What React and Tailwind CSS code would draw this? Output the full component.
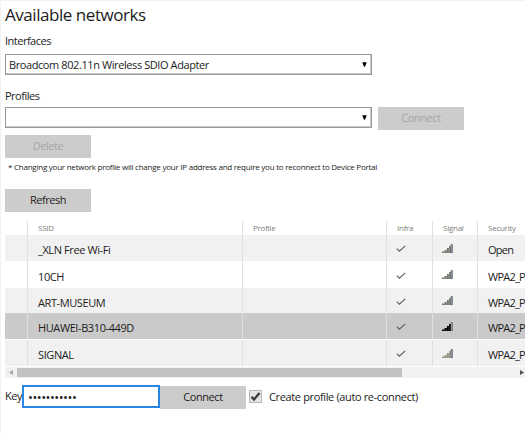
const networks = [
  { ssid: "_XLN Free Wi-Fi", security: "Open", row: "h-[26px] bg-[#f1f1f1]" },
  { ssid: "10CH", security: "WPA2_P", row: "h-[27px] bg-white" },
  { ssid: "ART-MUSEUM", security: "WPA2_P", row: "h-[25px] bg-[#f1f1f1]" },
  { ssid: "HUAWEI-B310-449D", security: "WPA2_P", selected: true, row: "h-[27px] border-b border-white bg-[#cacaca]" },
  { ssid: "SIGNAL", security: "WPA2_P", weak: true, row: "h-[26px] bg-[#f1f1f1]" },
];

const columns = "grid w-[520px] grid-cols-[22px_215px_144px_46px_45px_48px]";

function Check() {
  return (
    <svg className="-ml-px mt-[2px]" width="10" height="8" viewBox="0 0 10 8" fill="none" stroke="#5c5c5c" strokeWidth="1.1">
      <path d="M0.8 3.6 L3.4 6.2 L9.2 0.9" />
    </svg>
  );
}

function Signal({ selected, weak }) {
  const fill = selected ? "#000" : weak ? "#949a84" : "#747c70";
  return (
    <svg className="-ml-px mt-[1px]" width="11" height="10" viewBox="0 0 11 10" fill={fill}>
      <path d="M0 7.5h2.3V9H0zM2.5 6h2.2v3H2.5zM4.9 4h2v5h-2zM7.1 2H9v7H7.1z" />
      <path d="M9 0.5h1.4v8.2H9z" fill={selected ? "#bbb" : "#b0b8c4"} stroke="#66646e" strokeWidth="0.8" />
    </svg>
  );
}

function Select({ children }) {
  return (
    <div className="flex h-[21px] w-[367px] items-center justify-between border border-[#999] bg-white pr-[4px] pl-[3px] shadow-[inset_-1px_-1px_0_#c8c8c8]">
      <span className="whitespace-nowrap text-[11px] leading-[15px] tracking-[-0.41px]">{children}</span>
      <svg className="-mt-px" width="5" height="5" viewBox="0 0 5 5">
        <path d="M0.3 0.2h4.4L3 4.8H2z" fill="#000" />
      </svg>
    </div>
  );
}

function Button({ children, disabled }) {
  return (
    <button
      type="button"
      disabled={disabled}
      className="flex h-[23px] w-[86px] shrink-0 items-center justify-center bg-[#ccc] pb-[2px] text-[11px] leading-[15px] tracking-[-0.45px] text-[#1c1c1c] disabled:text-[#a5a5a5]"
    >
      {children}
    </button>
  );
}

function Cell({ children, className = "" }) {
  return <div className={"flex items-center border-l border-[#e0e0e0] pl-[10px] whitespace-nowrap " + className}>{children}</div>;
}

export default function App() {
  return (
    <main className="h-[434px] w-[525px] overflow-hidden border-t border-l border-[#f2f2f2] bg-white pl-[4px] font-['Open_Sans','Noto_Sans',sans-serif] text-[11px] leading-[15px] text-[#1c1c1c]">
      <h1 className="mt-[2px] h-[25px] text-[17px] leading-[24px] tracking-[-0.45px]">Available networks</h1>
      <div className="mt-[5px] h-[15px] tracking-[-0.5px]">Interfaces</div>
      <div className="mt-[6px]">
        <Select>Broadcom 802.11n Wireless SDIO Adapter</Select>
      </div>
      <div className="mt-[13px] h-[15px] tracking-[-0.5px]">Profiles</div>
      <div className="mt-[4px] flex gap-[6px]">
        <Select />
        <Button disabled>Connect</Button>
      </div>
      <div className="mt-[5px]">
        <Button disabled>Delete</Button>
      </div>
      <p className="mt-[3px] h-[12px] pl-[3px] text-[8px] leading-[12px] tracking-[-0.24px] whitespace-nowrap">
        * Changing your network profile will change your IP address and require you to reconnect to Device Portal
      </p>
      <div className="mt-[16px]">
        <Button>Refresh</Button>
      </div>
      <div className="mt-[9px] overflow-hidden">
        <div className={columns + " h-[14px] text-[8px] leading-[12px] tracking-[-0.25px] text-[#808080]"}>
          <div />
          <Cell>SSID</Cell>
          <Cell>Profile</Cell>
          <Cell>Infra</Cell>
          <Cell>Signal</Cell>
          <Cell>Security</Cell>
        </div>
        {networks.map((n) => (
          <div key={n.ssid} className={columns + " tracking-[-0.4px] " + n.row}>
            <div />
            <Cell className="pt-[3px]">{n.ssid}</Cell>
            <Cell />
            <Cell>
              <Check />
            </Cell>
            <Cell>
              <Signal selected={n.selected} weak={n.weak} />
            </Cell>
            <Cell className="pt-[3px] tracking-[-0.75px]">{n.security}</Cell>
          </div>
        ))}
      </div>
      <div className="mt-[1px] flex h-[11px] items-center bg-[#f1f1f1]">
        <div className="flex w-[12px] justify-center">
          <svg width="4" height="5" viewBox="0 0 4 5">
            <path d="M4 0v5L0 2.5z" fill="#a3a3a3" />
          </svg>
        </div>
        <div className="h-[9px] w-[385px] bg-[#c1c1c1]" />
        <svg className="mr-[1px] ml-auto" width="4" height="5" viewBox="0 0 4 5">
          <path d="M0 0v5l4-2.5z" fill="#505050" />
        </svg>
      </div>
      <div className="mt-[7px] flex h-[24px]">
        <span className="mt-[3px] w-[17px] tracking-[-0.4px]">Key</span>
        <div className="flex h-[23px] w-[138px] items-center border-2 border-[#2887e5] bg-white pt-[1px] pl-[4px] text-[13px]">
          <span className="tracking-[-0.5px]">•••••••••••</span>
        </div>
        <div className="mt-[1px]">
          <Button>Connect</Button>
        </div>
        <div className="mt-[5px] ml-[3px] flex h-[13px] w-[13px] items-center justify-center border border-[#b8b8b8] bg-[#e5e5e5]">
          <svg width="11" height="11" viewBox="0 0 11 11">
            <path d="M1.5 5.8 4 8.5 9.5 2" fill="none" stroke="#3e3e3e" strokeWidth="2.4" />
          </svg>
        </div>
        <span className="mt-[4px] ml-[7px] tracking-[-0.36px] whitespace-nowrap">Create profile (auto re-connect)</span>
      </div>
    </main>
  );
}
